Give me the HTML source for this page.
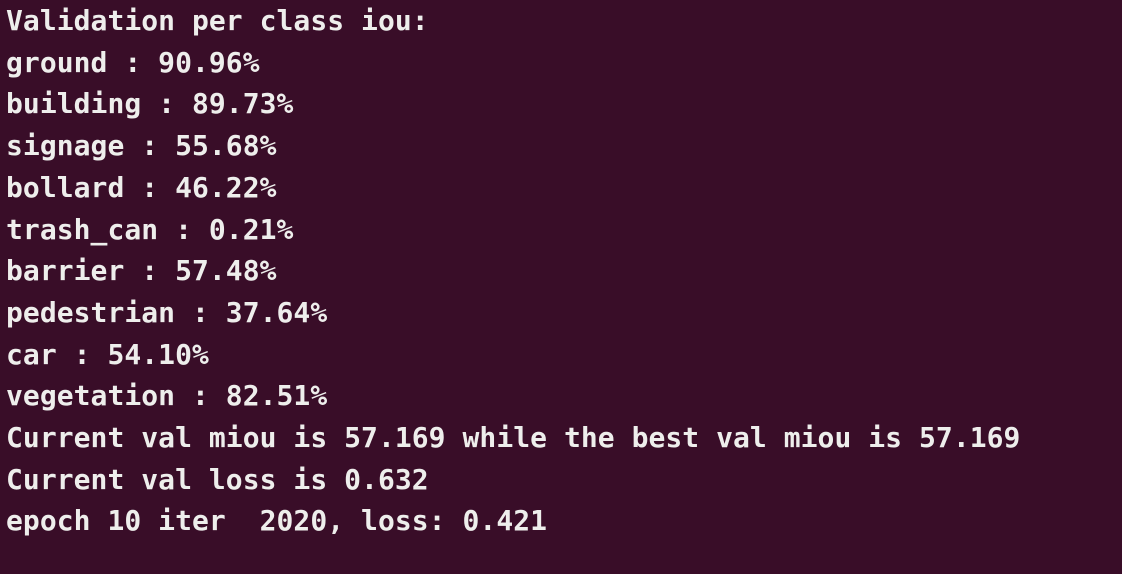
<!DOCTYPE html>
<html><head><style>
html,body{margin:0;padding:0;width:1122px;height:574px;overflow:hidden;background:#390d28;}
pre{margin:0;padding:0 0 0 6px;font-family:"DejaVu Sans Mono","Liberation Mono",monospace;font-weight:bold;font-size:28px;line-height:41.7px;color:#eeeeec;letter-spacing:0.05px;}
</style></head><body><pre>Validation per class iou:
ground : 90.96%
building : 89.73%
signage : 55.68%
bollard : 46.22%
trash_can : 0.21%
barrier : 57.48%
pedestrian : 37.64%
car : 54.10%
vegetation : 82.51%
Current val miou is 57.169 while the best val miou is 57.169
Current val loss is 0.632
epoch 10 iter  2020, loss: 0.421</pre></body></html>
